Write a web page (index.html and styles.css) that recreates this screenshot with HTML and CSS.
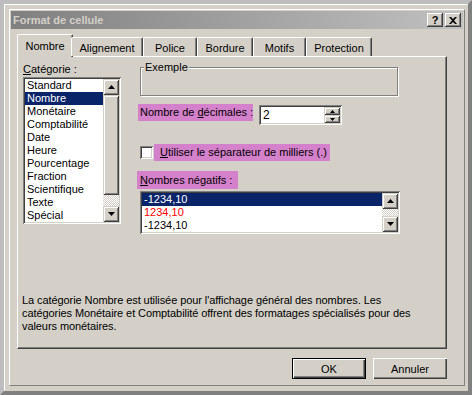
FILE: index.html
```html
<!DOCTYPE html>
<html lang="fr">
  <head>
    <meta charset="UTF-8" />
    <title>Format de cellule</title>
    <link rel="stylesheet" href="styles.css">
  </head>
  <body>
    <div class="window">
      <div class="frame">
        <div class="edge">
          <div class="titlebar">
            <span class="title">Format de cellule</span>
            <div class="caption-btns">
              <div class="cap-btn help">?</div>
              <div class="cap-btn">
                <svg width="8" height="7" viewBox="0 0 8 7"><path d="M0 0h2l2 2 2-2h2L5 3.5 8 7H6L4 5 2 7H0l3-3.5z" fill="#000"/></svg>
              </div>
            </div>
          </div>

          <div class="client">
            <div class="tabs">
              <div class="tab active">Nombre</div>
              <div class="tab">Alignement</div>
              <div class="tab">Police</div>
              <div class="tab">Bordure</div>
              <div class="tab">Motifs</div>
              <div class="tab">Protection</div>
            </div>

            <div class="panel">
              <div class="panel-main">
                <!-- left: category list -->
                <div class="cat-col">
                  <div class="label"><u>C</u>atégorie :</div>
                  <div class="listbox cat-list">
                    <ul class="items">
                      <li>Standard</li>
                      <li class="selected">Nombre</li>
                      <li>Monétaire</li>
                      <li>Comptabilité</li>
                      <li>Date</li>
                      <li>Heure</li>
                      <li>Pourcentage</li>
                      <li>Fraction</li>
                      <li>Scientifique</li>
                      <li>Texte</li>
                      <li>Spécial</li>
                    </ul>
                    <div class="vscroll">
                      <div class="sb-btn"><svg width="7" height="4" viewBox="0 0 7 4"><path d="M3.5 0L7 4H0z" fill="#000"/></svg></div>
                      <div class="sb-thumb"></div>
                      <div class="sb-track"></div>
                      <div class="sb-btn"><svg width="7" height="4" viewBox="0 0 7 4"><path d="M0 0h7L3.5 4z" fill="#000"/></svg></div>
                    </div>
                  </div>
                </div>

                <!-- right: options -->
                <div class="opt-col">
                  <div class="groupbox">
                    <span class="legend">Exemple</span>
                  </div>

                  <div class="dec-row">
                    <span class="pink dec-label">Nombre de <u>d</u>écimales :</span>
                    <div class="spin">
                      <span class="spin-value">2</span>
                      <div class="spin-btns">
                        <div class="spin-btn"><svg width="5" height="3" viewBox="0 0 5 3"><path d="M2.5 0L5 3H0z" fill="#000"/></svg></div>
                        <div class="spin-btn"><svg width="5" height="3" viewBox="0 0 5 3"><path d="M0 0h5L2.5 3z" fill="#000"/></svg></div>
                      </div>
                    </div>
                  </div>

                  <div class="check-row">
                    <span class="checkbox"></span>
                    <span class="pink check-label"><u>U</u>tiliser le séparateur de milliers (.)</span>
                  </div>

                  <span class="pink neg-label"><u>N</u>ombres négatifs :</span>
                  <div class="listbox neg-list">
                    <ul class="items">
                      <li class="selected">-1234,10</li>
                      <li class="red">1234,10</li>
                      <li>-1234,10</li>
                    </ul>
                    <div class="vscroll">
                      <div class="sb-btn"><svg width="7" height="4" viewBox="0 0 7 4"><path d="M3.5 0L7 4H0z" fill="#000"/></svg></div>
                      <div class="sb-track"></div>
                      <div class="sb-btn"><svg width="7" height="4" viewBox="0 0 7 4"><path d="M0 0h7L3.5 4z" fill="#000"/></svg></div>
                    </div>
                  </div>
                </div>
              </div>

              <p class="desc">La catégorie Nombre est utilisée pour l'affichage général des nombres. Les<br>catégories Monétaire et Comptabilité offrent des formatages spécialisés pour des<br>valeurs monétaires.</p>
            </div>

            <div class="buttons">
              <div class="btn default">OK</div>
              <div class="btn">Annuler</div>
            </div>
          </div>
        </div>
      </div>
    </div>
  </body>
</html>
```

FILE: styles.css
```css
body {
  margin: 0;
  padding: 0;
  background: #c0c0c0;
  font-family: "Liberation Sans", Arial, sans-serif;
  font-size: 11px;
  color: #000;
}
.window {
  width: 472px;
  height: 395px;
  box-sizing: border-box;
  background: #d4d0c8;
  border: 4px solid;
  border-color: #bdbdbd #808080 #808080 #bdbdbd;
}
.frame {
  height: 100%;
  box-sizing: border-box;
  border: 1px solid;
  border-color: #fff #d4d0c8 #d4d0c8 #fff;
  padding: 4px 2px 4px 4px;
}
.edge {
  height: 100%;
  box-sizing: border-box;
  border: 1px solid;
  border-color: #fff #808080 #808080 #fff;
  padding: 1px 1px 0 1px;
  display: flex;
  flex-direction: column;
}
.titlebar {
  height: 18px;
  flex-shrink: 0;
  display: flex;
  align-items: center;
  justify-content: space-between;
  padding: 0 2px 0 2px;
  background: linear-gradient(to right, #808080, #c0c0c0);
}
.title {
  color: #d4d0c8;
  font-weight: bold;
  font-size: 11px;
}
.caption-btns {
  display: flex;
  gap: 2px;
}
.cap-btn {
  width: 16px;
  height: 14px;
  box-sizing: border-box;
  background: #d4d0c8;
  box-shadow: inset -1px -1px #404040, inset 1px 1px #fff, inset -2px -2px #808080;
  display: flex;
  align-items: center;
  justify-content: center;
  font-weight: bold;
  font-size: 11px;
  line-height: 14px;
}
.cap-btn.help {
  padding-bottom: 1px;
}

/* client area */
.client {
  flex: 1;
  display: flex;
  flex-direction: column;
  padding: 5px 16px 6px 6px;
}
.tabs {
  display: flex;
  align-items: flex-end;
  height: 22px;
  padding-left: 2px;
  position: relative;
  z-index: 1;
}
.tab {
  height: 19px;
  box-sizing: border-box;
  padding-top: 3px;
  text-align: center;
  border-top: 1px solid #fff;
  border-left: 1px solid #fff;
  border-right: 1px solid #404040;
  border-radius: 2px 2px 0 0;
  box-shadow: inset -1px 0 #808080;
  background: #d4d0c8;
  line-height: 14px;
}
.tab:nth-child(1) { width: 52px; }
.tab:nth-child(2) { width: 72px; }
.tab:nth-child(3) { width: 54px; }
.tab:nth-child(4) { width: 56px; }
.tab:nth-child(5) { width: 53px; }
.tab:nth-child(6) { width: 66px; }
.tab.active {
  width: 56px;
  height: 23px;
  margin: 0 -2px -1px -2px;
  padding-top: 4px;
}
.panel {
  height: 293px;
  box-sizing: border-box;
  border-top: 1px solid #fff;
  border-left: 1px solid #fff;
  border-right: 1px solid #404040;
  border-bottom: 1px solid #404040;
  box-shadow: inset -1px -1px #808080;
  display: flex;
  flex-direction: column;
  padding: 6px 0 15px 5px;
}
.panel-main {
  display: flex;
  gap: 16px;
}
.label {
  line-height: 13px;
  height: 13px;
  margin-bottom: 1px;
}

/* sunken list boxes */
.listbox {
  display: flex;
  background: #fff;
  padding: 2px;
  box-shadow: inset 1px 1px #808080, inset -1px -1px #fff, inset 2px 2px #404040, inset -2px -2px #d4d0c8;
}
.cat-list {
  width: 98px;
  height: 147px;
  box-sizing: border-box;
}
.items {
  list-style: none;
  margin: 0;
  padding: 0;
  flex: 1;
}
.items li {
  height: 13px;
  line-height: 13px;
  padding-left: 2px;
  white-space: nowrap;
}
.items li.selected {
  background: #0a246a;
  color: #fff;
}
.items li.red {
  color: #ff0000;
}
.vscroll {
  width: 16px;
  display: flex;
  flex-direction: column;
}
.sb-btn,
.sb-thumb {
  background: #d4d0c8;
  box-shadow: inset 1px 1px #d4d0c8, inset -1px -1px #404040, inset 2px 2px #fff, inset -2px -2px #808080;
}
.sb-btn {
  height: 16px;
  display: flex;
  align-items: center;
  justify-content: center;
}
.sb-thumb {
  height: 100px;
}
.sb-track {
  flex: 1;
  background: repeating-conic-gradient(#d4d0c8 0 25%, #fff 0 50%) 0 0 / 2px 2px;
}

/* options column */
.opt-col {
  width: 263px;
  display: flex;
  flex-direction: column;
  align-items: flex-start;
}
.groupbox {
  position: relative;
  width: 258px;
  height: 29px;
  box-sizing: border-box;
  margin: 4px 0 0 3px;
  border: 1px solid #808080;
  box-shadow: inset 1px 1px #fff, 1px 1px #fff;
}
.legend {
  position: absolute;
  top: -8px;
  left: 3px;
  padding: 0 1px 0 1px;
  background: #d4d0c8;
  line-height: 14px;
}
.pink {
  background: #d580cb;
  white-space: nowrap;
}
.dec-row {
  display: flex;
  align-items: flex-start;
  gap: 6px;
  margin: 8px 0 0 1px;
}
.dec-label {
  width: 113px;
  height: 17px;
  line-height: 17px;
  padding-left: 2px;
}
.spin {
  width: 83px;
  height: 20px;
  box-sizing: border-box;
  margin-top: 1px;
  padding: 2px;
  display: flex;
  background: #fff;
  box-shadow: inset 1px 1px #808080, inset -1px -1px #fff, inset 2px 2px #404040, inset -2px -2px #d4d0c8;
}
.spin-value {
  flex: 1;
  padding-left: 2px;
  line-height: 16px;
  font-size: 12px;
}
.spin-btns {
  width: 16px;
  display: flex;
  flex-direction: column;
}
.spin-btn {
  flex: 1;
  background: #d4d0c8;
  box-shadow: inset 1px 1px #d4d0c8, inset -1px -1px #404040, inset 2px 2px #fff, inset -2px -2px #808080;
  display: flex;
  align-items: center;
  justify-content: center;
}
.check-row {
  display: flex;
  align-items: center;
  margin: 19px 0 0 3px;
}
.checkbox {
  width: 13px;
  height: 13px;
  box-sizing: border-box;
  background: #fff;
  box-shadow: inset 1px 1px #808080, inset -1px -1px #fff, inset 2px 2px #404040, inset -2px -2px #d4d0c8;
}
.check-label {
  height: 17px;
  line-height: 17px;
  padding: 0 3px 0 6px;
  margin-left: 1px;
}
.neg-label {
  margin-top: 10px;
  height: 18px;
  line-height: 19px;
  padding: 0 6px 0 3px;
}
.neg-list {
  width: 260px;
  height: 43px;
  box-sizing: border-box;
  margin: 2px 0 0 3px;
}
.desc {
  margin: auto 0 0 -1px;
  line-height: 13px;
  white-space: nowrap;
  letter-spacing: -0.08px;
}

/* dialog buttons */
.buttons {
  display: flex;
  justify-content: flex-end;
  gap: 7px;
  margin-top: 9px;
}
.btn {
  width: 74px;
  height: 21px;
  box-sizing: border-box;
  display: flex;
  align-items: center;
  justify-content: center;
  background: #d4d0c8;
  box-shadow: inset 1px 1px #fff, inset -1px -1px #404040, inset -2px -2px #808080;
}
.btn.default {
  box-shadow: inset 0 0 0 1px #000, inset 2px 2px #fff, inset -2px -2px #404040, inset -3px -3px #808080;
}
```
